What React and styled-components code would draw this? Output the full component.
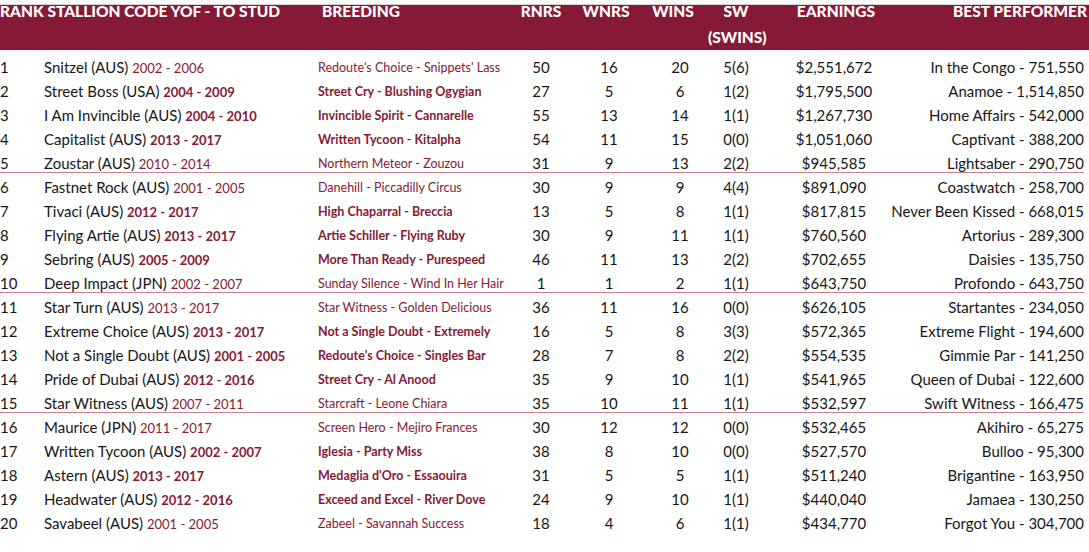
import React from "react";
import styled, { createGlobalStyle } from "styled-components";

const GlobalStyle = createGlobalStyle`
  body {
    margin: 0;
    background: #ffffff;
    font-family: Lato, "Open Sans", sans-serif;
  }
`;

const rows = [
  [1, "Snitzel (AUS)", "2002 - 2006", "Redoute's Choice - Snippets' Lass", 50, 16, 20, "5(6)", "$2,551,672", "In the Congo - 751,550"],
  [2, "Street Boss (USA)", "2004 - 2009", "Street Cry - Blushing Ogygian", 27, 5, 6, "1(2)", "$1,795,500", "Anamoe - 1,514,850"],
  [3, "I Am Invincible (AUS)", "2004 - 2010", "Invincible Spirit - Cannarelle", 55, 13, 14, "1(1)", "$1,267,730", "Home Affairs - 542,000"],
  [4, "Capitalist (AUS)", "2013 - 2017", "Written Tycoon - Kitalpha", 54, 11, 15, "0(0)", "$1,051,060", "Captivant - 388,200"],
  [5, "Zoustar (AUS)", "2010 - 2014", "Northern Meteor - Zouzou", 31, 9, 13, "2(2)", "$945,585", "Lightsaber - 290,750"],
  [6, "Fastnet Rock (AUS)", "2001 - 2005", "Danehill - Piccadilly Circus", 30, 9, 9, "4(4)", "$891,090", "Coastwatch - 258,700"],
  [7, "Tivaci (AUS)", "2012 - 2017", "High Chaparral - Breccia", 13, 5, 8, "1(1)", "$817,815", "Never Been Kissed - 668,015"],
  [8, "Flying Artie (AUS)", "2013 - 2017", "Artie Schiller - Flying Ruby", 30, 9, 11, "1(1)", "$760,560", "Artorius - 289,300"],
  [9, "Sebring (AUS)", "2005 - 2009", "More Than Ready - Purespeed", 46, 11, 13, "2(2)", "$702,655", "Daisies - 135,750"],
  [10, "Deep Impact (JPN)", "2002 - 2007", "Sunday Silence - Wind In Her Hair", 1, 1, 2, "1(1)", "$643,750", "Profondo - 643,750"],
  [11, "Star Turn (AUS)", "2013 - 2017", "Star Witness - Golden Delicious", 36, 11, 16, "0(0)", "$626,105", "Startantes - 234,050"],
  [12, "Extreme Choice (AUS)", "2013 - 2017", "Not a Single Doubt - Extremely", 16, 5, 8, "3(3)", "$572,365", "Extreme Flight - 194,600"],
  [13, "Not a Single Doubt (AUS)", "2001 - 2005", "Redoute's Choice - Singles Bar", 28, 7, 8, "2(2)", "$554,535", "Gimmie Par - 141,250"],
  [14, "Pride of Dubai (AUS)", "2012 - 2016", "Street Cry - Al Anood", 35, 9, 10, "1(1)", "$541,965", "Queen of Dubai - 122,600"],
  [15, "Star Witness (AUS)", "2007 - 2011", "Starcraft - Leone Chiara", 35, 10, 11, "1(1)", "$532,597", "Swift Witness - 166,475"],
  [16, "Maurice (JPN)", "2011 - 2017", "Screen Hero - Mejiro Frances", 30, 12, 12, "0(0)", "$532,465", "Akihiro - 65,275"],
  [17, "Written Tycoon (AUS)", "2002 - 2007", "Iglesia - Party Miss", 38, 8, 10, "0(0)", "$527,570", "Bulloo - 95,300"],
  [18, "Astern (AUS)", "2013 - 2017", "Medaglia d'Oro - Essaouira", 31, 5, 5, "1(1)", "$511,240", "Brigantine - 163,950"],
  [19, "Headwater (AUS)", "2012 - 2016", "Exceed and Excel - River Dove", 24, 9, 10, "1(1)", "$440,040", "Jamaea - 130,250"],
  [20, "Savabeel (AUS)", "2001 - 2005", "Zabeel - Savannah Success", 18, 4, 6, "1(1)", "$434,770", "Forgot You - 304,700"],
];

const MAROON = "#861a36";
const COLS = "44px 274px 198px 50px 86px 56px 56px 116px 1fr";

const Table = styled.div`
  width: 1089px;
  padding-top: 4px;
`;

const Header = styled.div`
  display: grid;
  grid-template-columns: ${COLS};
  height: 45px;
  background: ${MAROON};
  border-top: 1px solid #d9d3d5;
  color: #ffffff;
  font-family: Lato, sans-serif;
  font-weight: 900;
  font-size: 15.5px;
  text-transform: uppercase;
  line-height: 26px;
  padding-right: 2px;
`;

const HeadCell = styled.div`
  text-align: ${p => p.align || "left"};
  white-space: nowrap;
  margin-top: -7px;
  padding-left: ${p => p.pl || 0}px;
  padding-right: ${p => p.pr || 0}px;
`;

const Body = styled.div`
  padding-top: 5px;
  padding-right: 5px;
`;

const Row = styled.div`
  display: grid;
  grid-template-columns: ${COLS};
  height: 24px;
  align-items: center;
  font-size: 15px;
  color: #161616;
  background: ${p =>
    p.groupEnd
      ? `linear-gradient(to top, transparent 2px, #c98390 2px, #c98390 3px, transparent 3px)`
      : "none"};
`;

const Cell = styled.div`
  text-align: ${p => p.align || "left"};
  white-space: nowrap;
  padding-left: ${p => p.pl || 0}px;
`;

const Years = styled.span`
  color: ${MAROON};
  font-size: 13px;
  font-weight: ${p => (p.bold ? 700 : 400)};
`;

const Breeding = styled.div`
  color: ${MAROON};
  font-size: 12.5px;
  font-weight: ${p => (p.bold ? 700 : 400)};
  white-space: nowrap;
`;

export default function App() {
  return (
    <>
      <GlobalStyle />
      <Table>
        <Header>
          <HeadCell style={{ gridColumn: "1 / 3" }}>Rank Stallion Code YOF - To Stud</HeadCell>
          <HeadCell pl={4}>Breeding</HeadCell>
          <HeadCell align="center">RNRS</HeadCell>
          <HeadCell align="center" pr={6}>WNRS</HeadCell>
          <HeadCell align="center" pr={14}>Wins</HeadCell>
          <HeadCell align="center">
            SW
            <br />
            (SWINS)
          </HeadCell>
          <HeadCell align="center" pl={28}>Earnings</HeadCell>
          <HeadCell align="right">Best Performer</HeadCell>
        </Header>
        <Body>
          {rows.map(r => {
            const bold = r[0] % 5 > 1;
            return (
              <Row key={r[0]} groupEnd={r[0] % 5 === 0 && r[0] < 20}>
                <Cell>{r[0]}</Cell>
                <Cell>
                  {r[1]} <Years bold={bold}>{r[2]}</Years>
                </Cell>
                <Breeding bold={bold}>{r[3]}</Breeding>
                <Cell align="center">{r[4]}</Cell>
                <Cell align="center">{r[5]}</Cell>
                <Cell align="center">{r[6]}</Cell>
                <Cell align="center">{r[7]}</Cell>
                <Cell align="center" pl={24}>{r[8]}</Cell>
                <Cell align="right">{r[9]}</Cell>
              </Row>
            );
          })}
        </Body>
      </Table>
    </>
  );
}
